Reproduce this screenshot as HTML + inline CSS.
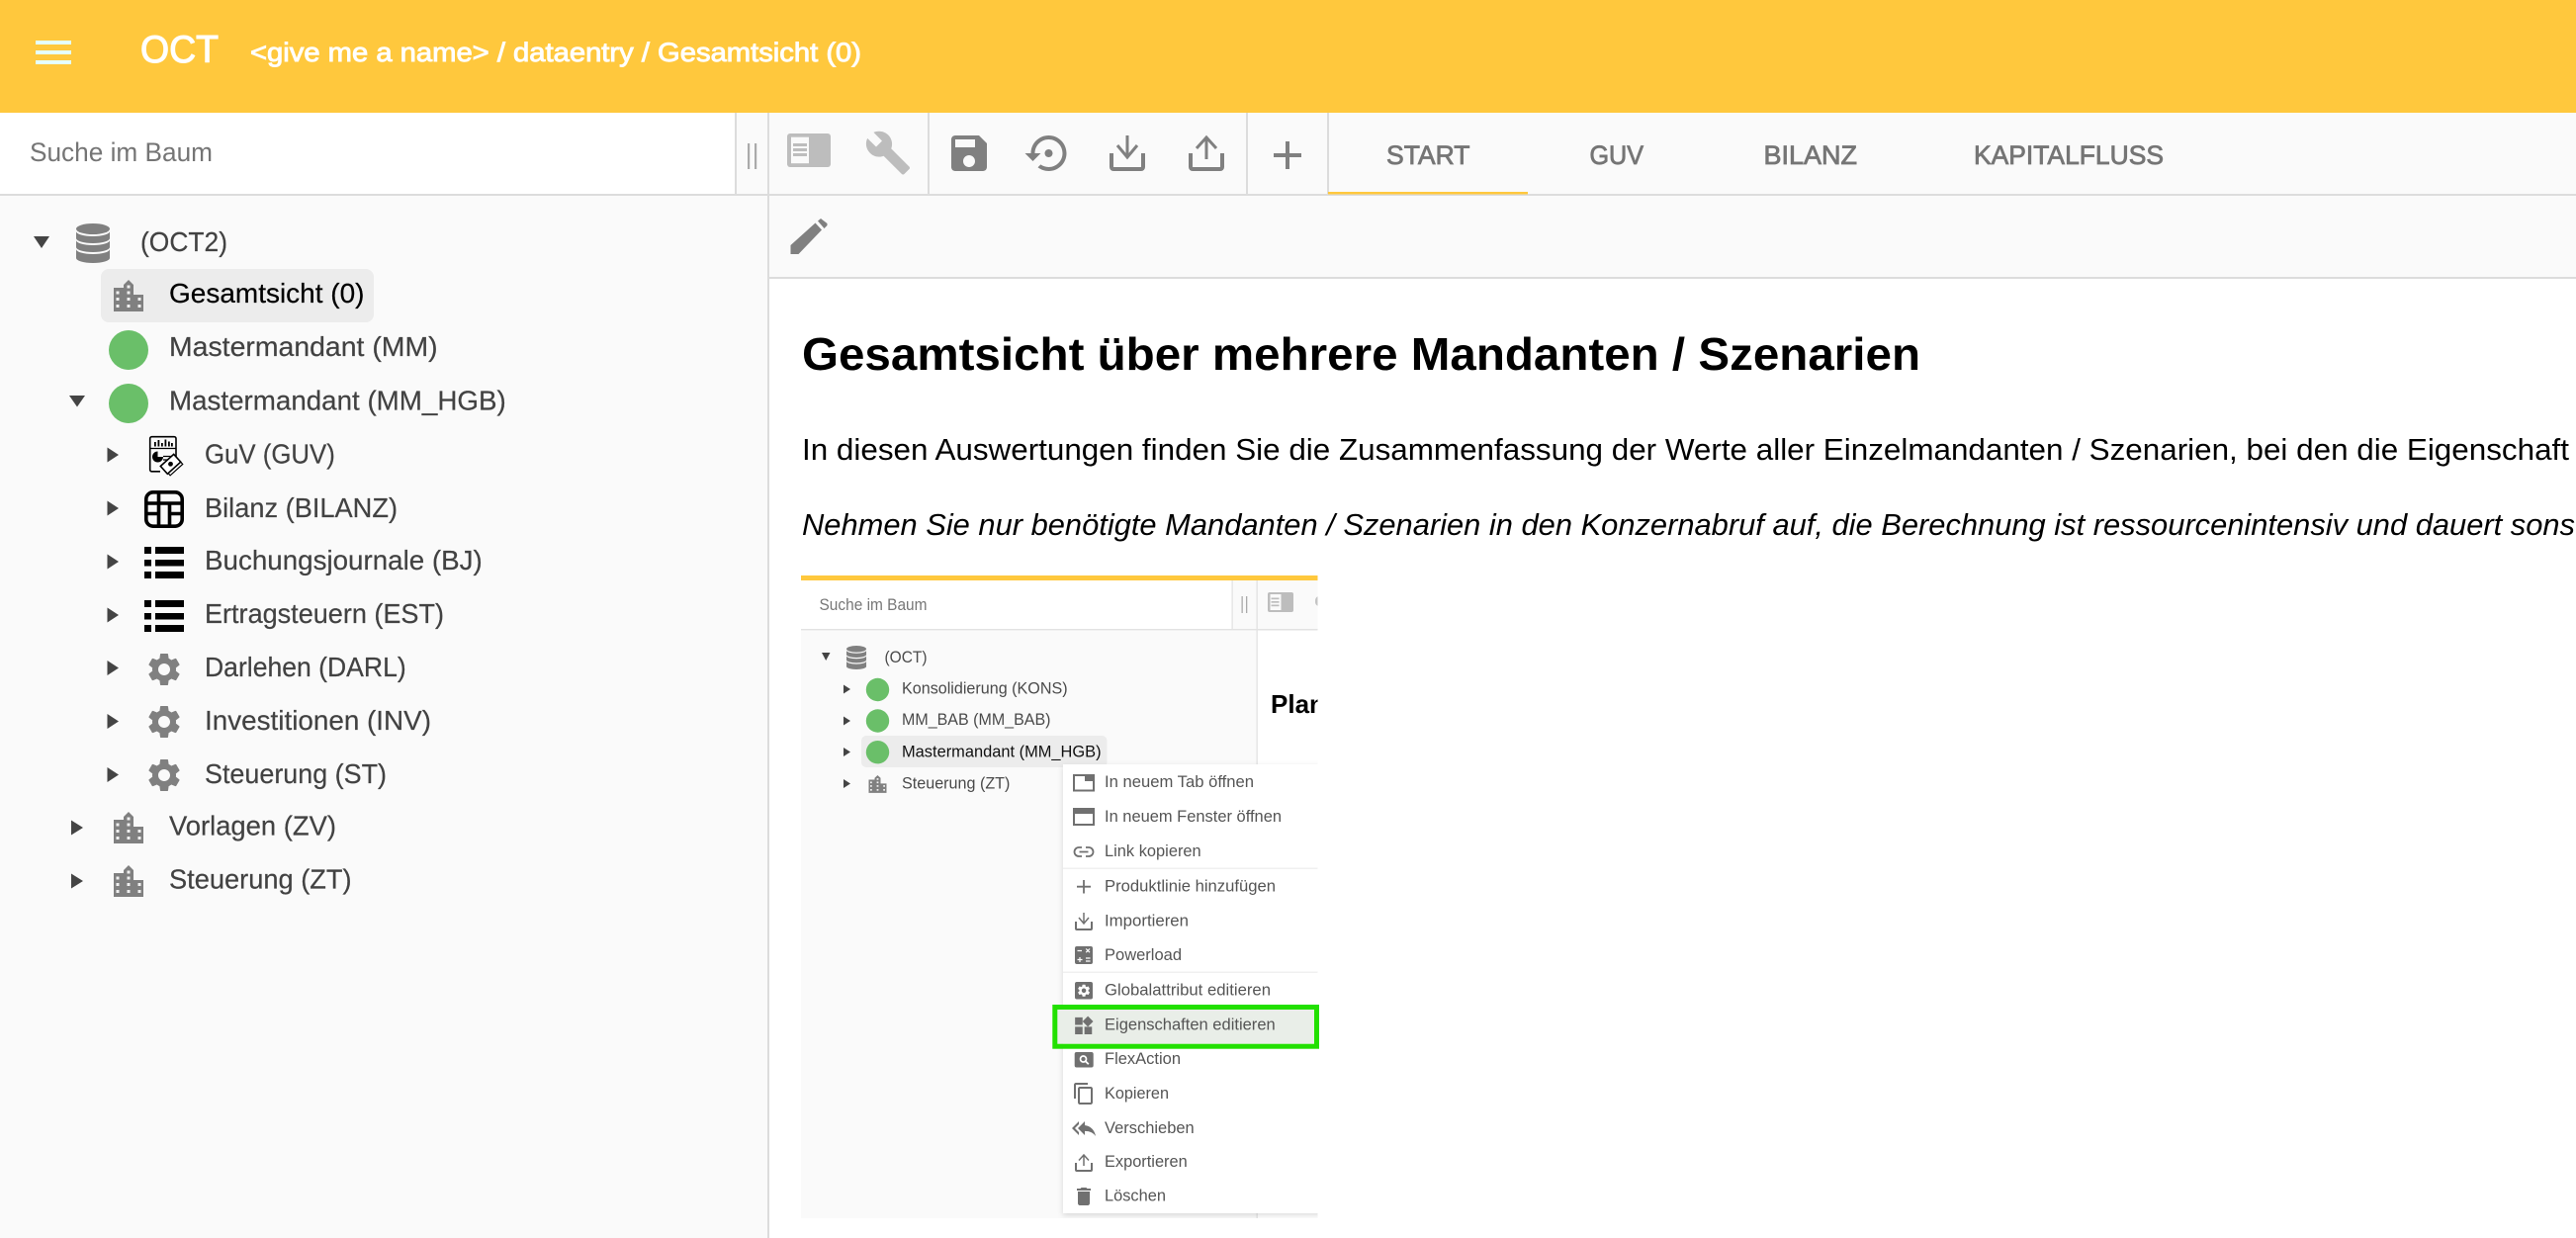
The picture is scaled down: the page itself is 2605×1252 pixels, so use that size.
<!DOCTYPE html>
<html lang="de">
<head>
<meta charset="utf-8">
<title>OCT</title>
<style>
html,body{margin:0;padding:0;background:#fff;width:2605px;height:1252px;overflow:hidden}
svg{display:block}
text{font-family:"Liberation Sans",Arial,sans-serif;white-space:pre}
.t{font-size:28px;fill:#424242;stroke:#424242;stroke-width:.2}
.tab{font-size:27px;fill:#757575;stroke:#757575;stroke-width:.8}
.s{font-size:17px;fill:#4a4a4a}
.m{font-size:17px;fill:#555}
</style>
</head>
<body>
<svg xmlns="http://www.w3.org/2000/svg" width="2605" height="1252" viewBox="0 0 2605 1252">
<defs>
<path id="gear" d="M19.14 12.94c.04-.3.06-.61.06-.94 0-.32-.02-.64-.07-.94l2.03-1.58c.18-.14.23-.41.12-.61l-1.92-3.32c-.12-.22-.37-.29-.59-.22l-2.39.96c-.5-.38-1.03-.7-1.62-.94l-.36-2.54c-.04-.24-.24-.41-.48-.41h-3.84c-.24 0-.43.17-.47.41l-.36 2.54c-.59.24-1.13.57-1.62.94l-2.39-.96c-.22-.08-.47 0-.59.22L2.74 8.87c-.12.21-.08.47.12.61l2.03 1.58c-.05.3-.09.63-.09.94s.02.64.07.94l-2.03 1.58c-.18.14-.23.41-.12.61l1.92 3.32c.12.22.37.29.59.22l2.39-.96c.5.38 1.03.7 1.62.94l.36 2.54c.05.24.24.41.48.41h3.84c.24 0 .44-.17.47-.41l.36-2.54c.59-.24 1.13-.56 1.62-.94l2.39.96c.22.08.47 0 .59-.22l1.92-3.32c.12-.22.07-.47-.12-.61l-2.01-1.58zM12 15.6c-1.98 0-3.6-1.62-3.6-3.6s1.62-3.6 3.6-3.6 3.6 1.62 3.6 3.6-1.62 3.6-3.6 3.6z"/>
<g id="bld">
<path fill="#808080" d="M0 8H10V5L15 0L20 5V15H30V32H0Z"/>
<g fill="#f0f0f0">
<rect x="13.5" y="5.5" width="3" height="3"/>
<rect x="13.5" y="11.5" width="3" height="3"/><rect x="13.5" y="18" width="3" height="3"/><rect x="13.5" y="25" width="3" height="3"/>
<rect x="2.5" y="11.5" width="3" height="3"/><rect x="2.5" y="18" width="3" height="3"/><rect x="2.5" y="25" width="3" height="3"/>
<rect x="24.5" y="18" width="3" height="3"/><rect x="24.5" y="25" width="3" height="3"/>
</g>
</g>
<g id="db" fill="#808080">
<ellipse cx="17" cy="5.5" rx="17" ry="5.5"/>
<path d="M0 8A17 5 0 0 0 34 8V15A17 5 0 0 1 0 15Z"/>
<path d="M0 17A17 5 0 0 0 34 17V24A17 5 0 0 1 0 24Z"/>
<path d="M0 26A17 5 0 0 0 34 26V35A17 5 0 0 1 0 35Z"/>
</g>
<g id="list" fill="#000">
<rect x="0" y="0" width="7" height="7"/><rect x="11" y="0" width="29" height="7"/>
<rect x="0" y="13" width="7" height="6.500"/><rect x="11" y="13" width="29" height="6.500"/>
<rect x="0" y="25" width="7" height="7"/><rect x="11" y="25" width="29" height="7"/>
</g>
<g id="dl" fill="none" stroke-linecap="butt">
<path stroke-width="4" d="M2 18v14a2 2 0 0 0 2 2h28a2 2 0 0 0 2-2V18"/>
<path stroke-width="3" d="M18 0V22M8 10L18 22L28 10"/>
</g>
<g id="ul" fill="none" stroke-linecap="butt">
<path stroke-width="4" d="M2 18v14a2 2 0 0 0 2 2h28a2 2 0 0 0 2-2V18"/>
<path stroke-width="3" d="M18 2V24M8 13L18 2L28 13"/>
</g>
<clipPath id="imgclip"><rect x="810" y="582" width="522.500" height="650"/></clipPath>
<filter id="sh" x="-10%" y="-10%" width="120%" height="120%"><feDropShadow dx="0" dy="2" stdDeviation="3" flood-color="#000" flood-opacity=".14"/></filter>
</defs>

<!-- backgrounds -->
<rect width="2605" height="1252" fill="#fff"/>
<rect x="0" y="114" width="2605" height="84" fill="#fafafa"/>
<rect x="0" y="198" width="777" height="1054" fill="#fafafa"/>
<rect x="778" y="198" width="1827" height="84" fill="#fafafa"/>
<rect x="0" y="114" width="744" height="82" fill="#fff"/>

<!-- header -->
<rect x="0" y="0" width="2605" height="114" fill="#ffc83d"/>
<g fill="#e6ffff"><rect x="36" y="41" width="36" height="4"/><rect x="36" y="51" width="36" height="4"/><rect x="36" y="61" width="36" height="4"/></g>
<text x="142" y="63" font-size="39" fill="#fff" stroke="#fff" stroke-width="1.100" textLength="79" lengthAdjust="spacingAndGlyphs">OCT</text>
<text x="253" y="62" font-size="27" fill="#fff" stroke="#fff" stroke-width=".9" textLength="618" lengthAdjust="spacingAndGlyphs">&lt;give me a name&gt; / dataentry / Gesamtsicht (0)</text>

<!-- structural lines -->
<g fill="#dcdcdc">
<rect x="0" y="196" width="2605" height="2"/>
<rect x="778" y="280" width="1827" height="2"/>
<rect x="743" y="114" width="2" height="83"/>
<rect x="776" y="114" width="2" height="1138"/>
<rect x="938" y="114" width="2" height="82"/>
<rect x="1260" y="114" width="2" height="82"/>
<rect x="1342" y="114" width="2" height="82"/>
</g>
<rect x="1343" y="194" width="202" height="2.500" fill="#ffc83d"/>

<!-- search -->
<text x="30" y="163" font-size="27" fill="#757575" textLength="185" lengthAdjust="spacingAndGlyphs">Suche im Baum</text>
<g fill="#aaa"><rect x="756" y="145" width="2.200" height="26"/><rect x="763" y="145" width="2.200" height="26"/></g>

<!-- toolbar icons -->
<rect x="796" y="135" width="44" height="34" rx="3" fill="#bdbdbd"/>
<rect x="800" y="138.700" width="18" height="26.500" fill="#fafafa"/>
<g fill="#bdbdbd"><rect x="802" y="145" width="14" height="3"/><rect x="802" y="150" width="14" height="3"/><rect x="802" y="155" width="14" height="3"/></g>
<path transform="translate(874 130.500) scale(2)" fill="#bdbdbd" d="M22.700 19l-9.100-9.100c.9-2.300.4-5-1.500-6.900-2-2-5-2.400-7.400-1.300L9 6 6 9 1.600 4.700C.4 7.100.9 10.100 2.900 12.100c1.900 1.900 4.600 2.400 6.900 1.500l9.100 9.100c.4.4 1 .4 1.400 0l2.300-2.300c.5-.4.5-1.100.1-1.400z"/>
<path transform="translate(956 131) scale(2)" fill="#808080" d="M17 3H5c-1.110 0-2 .9-2 2v14c0 1.100.89 2 2 2h14c1.100 0 2-.9 2-2V7l-4-4zm-5 16c-1.660 0-3-1.340-3-3s1.340-3 3-3 3 1.340 3 3-1.340 3-3 3zm3-10H5V5h10v4z"/>
<path transform="translate(1036.500 131) scale(2)" fill="#808080" d="M14 12c0-1.100-.9-2-2-2s-2 .9-2 2 .9 2 2 2 2-.9 2-2zm-2-9c-4.970 0-9 4.030-9 9H0l4 4 4-4H5c0-3.870 3.130-7 7-7s7 3.130 7 7-3.130 7-7 7c-1.510 0-2.910-.49-4.060-1.300l-1.420 1.440C8.040 20.300 9.940 21 12 21c4.970 0 9-4.030 9-9s-4.030-9-9-9z"/>
<use href="#dl" x="1122" y="137" stroke="#808080"/>
<use href="#ul" x="1202" y="137" stroke="#808080"/>
<path d="M1302 143V171M1288 157H1316" stroke="#808080" stroke-width="4" fill="none"/>
<!-- pencil -->
<path fill="#808080" d="M799.500 248L824.500 225.500L831 232.500L807.500 257H799.500Z"/>
<path fill="#808080" d="M827 223.500L830 221L836.500 226V228L833.500 231Z"/>

<!-- tabs -->
<text class="tab" x="1402" y="166" textLength="84.500" lengthAdjust="spacingAndGlyphs">START</text>
<text class="tab" x="1607.500" y="166" textLength="54.500" lengthAdjust="spacingAndGlyphs">GUV</text>
<text class="tab" x="1783.500" y="166" textLength="94.500" lengthAdjust="spacingAndGlyphs">BILANZ</text>
<text class="tab" x="1996" y="166" textLength="192" lengthAdjust="spacingAndGlyphs">KAPITALFLUSS</text>

<!-- tree -->
<path d="M34 239H50L42 251Z" fill="#444"/>
<use href="#db" x="77" y="226"/>
<text class="t" x="142" y="254" textLength="88" lengthAdjust="spacingAndGlyphs">(OCT2)</text>

<rect x="102" y="272" width="276" height="54" rx="8" fill="#ececec"/>
<use href="#bld" x="115" y="283"/>
<text class="t" x="171" y="306" style="fill:#000;stroke:#000" textLength="197.500" lengthAdjust="spacingAndGlyphs">Gesamtsicht (0)</text>

<ellipse cx="130" cy="354" rx="20" ry="20" fill="#6abf69"/>
<text class="t" x="171" y="360" textLength="271.600" lengthAdjust="spacingAndGlyphs">Mastermandant (MM)</text>

<path d="M70 400H86L78 411.500Z" fill="#444"/>
<ellipse cx="130" cy="408" rx="20" ry="20" fill="#6abf69"/>
<text class="t" x="171" y="414.500" textLength="340.700" lengthAdjust="spacingAndGlyphs">Mastermandant (MM_HGB)</text>

<g fill="#444">
<path d="M108.500 452.500L120 460L108.500 467.500Z"/>
<path d="M108.500 506.500L120 514L108.500 521.500Z"/>
<path d="M108.500 560.500L120 568L108.500 575.500Z"/>
<path d="M108.500 614.500L120 622L108.500 629.500Z"/>
<path d="M108.500 668L120 675.500L108.500 683Z"/>
<path d="M108.500 722L120 729.500L108.500 737Z"/>
<path d="M108.500 776L120 783.500L108.500 791Z"/>
<path d="M72 829.500L84 837L72 844.500Z"/>
<path d="M72 883.500L84 891L72 898.500Z"/>
</g>

<text class="t" x="207" y="468.500" textLength="131.800" lengthAdjust="spacingAndGlyphs">GuV (GUV)</text>
<text class="t" x="207" y="522.800" textLength="195" lengthAdjust="spacingAndGlyphs">Bilanz (BILANZ)</text>
<text class="t" x="207" y="576" textLength="280.800" lengthAdjust="spacingAndGlyphs">Buchungsjournale (BJ)</text>
<text class="t" x="207" y="630" textLength="242" lengthAdjust="spacingAndGlyphs">Ertragsteuern (EST)</text>
<text class="t" x="207" y="684" textLength="203.700" lengthAdjust="spacingAndGlyphs">Darlehen (DARL)</text>
<text class="t" x="207" y="738" textLength="229" lengthAdjust="spacingAndGlyphs">Investitionen (INV)</text>
<text class="t" x="207" y="792" textLength="184" lengthAdjust="spacingAndGlyphs">Steuerung (ST)</text>
<text class="t" x="171" y="844.500" textLength="169" lengthAdjust="spacingAndGlyphs">Vorlagen (ZV)</text>
<text class="t" x="171" y="898.500" textLength="184.600" lengthAdjust="spacingAndGlyphs">Steuerung (ZT)</text>

<!-- GuV icon -->
<g fill="none" stroke="#000">
<path stroke-width="1.600" d="M178 462V443.500a1.800 1.800 0 0 0-1.800-1.800H153.500a1.800 1.800 0 0 0-1.800 1.800V475a1.800 1.800 0 0 0 1.800 1.800H162"/>
<path stroke-width="1.300" d="M152 453.500H178M165 465H172M165 461.500H174"/>
</g>
<g fill="#000">
<rect x="156" y="447" width="1.800" height="4.500"/><rect x="159.500" y="445" width="1.800" height="6.500"/><rect x="163" y="448" width="1.800" height="3.500"/><rect x="166.500" y="444.500" width="1.800" height="7"/><rect x="170" y="446.500" width="1.800" height="5"/><rect x="173" y="448" width="1.800" height="3.500"/>
<path d="M159.500 456.500a5.500 5.500 0 1 0 5.500 5.500H159.500Z"/>
</g>
<g transform="translate(172.700 469.500) rotate(-42)">
<rect x="-8" y="-2" width="17" height="10" fill="#fff" stroke="#000" stroke-width="1.200"/>
<rect x="-9" y="-5.500" width="18" height="10.500" fill="#fff" stroke="#000" stroke-width="1.600"/>
<circle cx="0" cy="-.3" r="2.400" fill="#000"/>
</g>

<!-- Bilanz icon -->
<g fill="none" stroke="#000" stroke-width="3.600">
<rect x="147.800" y="497.800" width="36.400" height="34.400" rx="7"/>
<path d="M160.500 497.800V532.200M147.800 509H160.500M147.800 519.500H160.500M160.500 509H184.200M171.500 509V532.200M171.500 519.500H184.200"/>
</g>

<use href="#list" x="146" y="553"/>
<use href="#list" x="146" y="607"/>

<g fill="#808080">
<use href="#gear" transform="translate(146 657) scale(1.667)"/>
<use href="#gear" transform="translate(146 710) scale(1.667)"/>
<use href="#gear" transform="translate(146 764) scale(1.667)"/>
</g>
<use href="#bld" x="115" y="821"/>
<use href="#bld" x="115" y="875"/>

<!-- content -->
<text x="811" y="374" font-size="46" font-weight="700" fill="#000" textLength="1131" lengthAdjust="spacingAndGlyphs">Gesamtsicht über mehrere Mandanten / Szenarien</text>
<text x="811" y="465" font-size="31" fill="#000" textLength="1787" lengthAdjust="spacingAndGlyphs">In diesen Auswertungen finden Sie die Zusammenfassung der Werte aller Einzelmandanten / Szenarien, bei den die Eigenschaft</text>
<text x="811" y="541" font-size="31" font-style="italic" fill="#000" textLength="1793" lengthAdjust="spacingAndGlyphs">Nehmen Sie nur benötigte Mandanten / Szenarien in den Konzernabruf auf, die Berechnung ist ressourcenintensiv und dauert sons</text>

<!-- embedded screenshot -->
<g clip-path="url(#imgclip)">
<rect x="810" y="582" width="523" height="650" fill="#fff"/>
<rect x="810" y="638" width="461" height="594" fill="#fafafa"/>
<rect x="810" y="582" width="523" height="5" fill="#ffc83d"/>
<rect x="1247" y="587" width="86" height="49" fill="#fafafa"/>
<rect x="810" y="636" width="523" height="1.500" fill="#e2e2e2"/>
<rect x="1245.500" y="587" width="1.300" height="49" fill="#e2e2e2"/>
<rect x="1270.500" y="587" width="1.300" height="645" fill="#e2e2e2"/>
<text x="828.500" y="617" font-size="17" fill="#777" textLength="109" lengthAdjust="spacingAndGlyphs">Suche im Baum</text>
<g fill="#aaa"><rect x="1255.500" y="603" width="1.300" height="17"/><rect x="1260" y="603" width="1.300" height="17"/></g>
<rect x="1282" y="599" width="26" height="20" rx="2" fill="#bdbdbd"/>
<rect x="1284.500" y="601" width="11" height="16" fill="#fafafa"/>
<g fill="#bdbdbd"><rect x="1285.500" y="604.500" width="8" height="1.700"/><rect x="1285.500" y="608" width="8" height="1.700"/><rect x="1285.500" y="611.500" width="8" height="1.700"/></g>
<path d="M1333 603a5 5 0 0 0-3 5a5 5 0 0 0 3 5Z" fill="#c4c4c4"/>
<text x="1285" y="721" font-size="26" font-weight="700" fill="#000">Plan</text>

<!-- small tree -->
<path d="M831 660H839.500L835.200 668Z" fill="#444"/>
<use href="#db" transform="translate(856 653) scale(.59 .6)"/>
<text class="s" x="894.500" y="670" textLength="43" lengthAdjust="spacingAndGlyphs">(OCT)</text>

<rect x="871" y="744" width="248.500" height="32" rx="5" fill="#ececec"/>
<g fill="#444">
<path d="M853 692.500L860 697L853 701.500Z"/>
<path d="M853 724.500L860 729L853 733.500Z"/>
<path d="M853 756L860 760.500L853 765Z"/>
<path d="M853 788L860 792.500L853 797Z"/>
</g>
<g fill="#6abf69">
<circle cx="887.500" cy="697.500" r="11.700"/>
<circle cx="887.500" cy="729" r="11.700"/>
<circle cx="887.500" cy="760.700" r="11.700"/>
</g>
<use href="#bld" transform="translate(878.500 784) scale(.6 .56)"/>
<text class="s" x="912" y="701.700" textLength="167.600" lengthAdjust="spacingAndGlyphs">Konsolidierung (KONS)</text>
<text class="s" x="912" y="733" textLength="150.500" lengthAdjust="spacingAndGlyphs">MM_BAB (MM_BAB)</text>
<text class="s" x="912" y="765.700" style="fill:#111" textLength="201.600" lengthAdjust="spacingAndGlyphs">Mastermandant (MM_HGB)</text>
<text class="s" x="912" y="797.700" textLength="109.400" lengthAdjust="spacingAndGlyphs">Steuerung (ZT)</text>

<!-- context menu -->
<rect x="1075" y="773" width="320" height="454" fill="#fff" filter="url(#sh)"/>
<rect x="1075" y="877.500" width="258" height="1.500" fill="#f0f0f0"/>
<rect x="1075" y="982.500" width="258" height="1.500" fill="#f0f0f0"/>

<g fill="#707070" stroke="none">
<!-- tab -->
<rect x="1086" y="784" width="20" height="15.500" fill="none" stroke="#707070" stroke-width="2"/>
<rect x="1097" y="784" width="9" height="6"/>
<!-- window -->
<rect x="1086" y="818" width="20" height="16" fill="none" stroke="#707070" stroke-width="2"/>
<rect x="1086" y="818" width="20" height="5"/>
<!-- link -->
<path d="M1094 857H1091a4.500 4.500 0 0 0 0 9H1094M1098 857H1101a4.500 4.500 0 0 1 0 9H1098M1091.500 861.500H1100.500" fill="none" stroke="#707070" stroke-width="1.800"/>
<!-- plus -->
<path d="M1096 890V903.500M1089 896.700H1103" fill="none" stroke="#707070" stroke-width="1.800"/>
<!-- import / export -->
<use href="#dl" transform="translate(1087 923) scale(.5)" stroke="#707070"/>
<use href="#ul" transform="translate(1087 1167) scale(.5)" stroke="#707070"/>
<!-- powerload -->
<rect x="1087" y="957" width="18" height="18" rx="2"/>
<path d="M1089.500 961.500H1094M1098.200 959.500L1102 963.200M1102 959.500L1098.200 963.200M1089.500 970.500H1094.500M1092 968V973M1098 969H1102.500M1098 972H1102.500" fill="none" stroke="#fff" stroke-width="1.200"/>
<!-- global -->
<rect x="1087" y="993" width="18" height="17.500" rx="2"/>
<use href="#gear" transform="translate(1088.500 994.200) scale(.63)" fill="#fff"/>
<!-- flex -->
<rect x="1086.700" y="1064" width="19" height="15.500" rx="2"/>
<circle cx="1095.500" cy="1071" r="3" fill="none" stroke="#fff" stroke-width="1.700"/>
<path d="M1097.800 1073.300L1100.800 1076.300" stroke="#fff" stroke-width="1.800"/>
<!-- copy -->
<path transform="translate(1084 1094)" d="M16 1H4c-1.100 0-2 .9-2 2v14h2V3h12V1zm3 4H8c-1.100 0-2 .9-2 2v14c0 1.100.9 2 2 2h11c1.100 0 2-.9 2-2V7c0-1.100-.9-2-2-2zm0 16H8V7h11v14z"/>
<!-- move -->
<path transform="translate(1084 1129)" d="M7 8V5l-7 7 7 7v-3l-4-4 4-4zm6 1V5l-7 7 7 7v-4.100c5 0 8.500 1.600 11 5.100-1-5-4-10-11-11z"/>
<!-- delete -->
<path transform="translate(1084 1198)" d="M6 19c0 1.100.9 2 2 2h8c1.100 0 2-.9 2-2V7H6v12zM19 4h-3.500l-1-1h-5l-1 1H5v2h14V4z"/>
</g>

<text class="m" x="1117" y="796" textLength="151" lengthAdjust="spacingAndGlyphs">In neuem Tab öffnen</text>
<text class="m" x="1117" y="831" textLength="179" lengthAdjust="spacingAndGlyphs">In neuem Fenster öffnen</text>
<text class="m" x="1117" y="866" textLength="97.700" lengthAdjust="spacingAndGlyphs">Link kopieren</text>
<text class="m" x="1117" y="901.700" textLength="173" lengthAdjust="spacingAndGlyphs">Produktlinie hinzufügen</text>
<text class="m" x="1117" y="936.700" textLength="85" lengthAdjust="spacingAndGlyphs">Importieren</text>
<text class="m" x="1117" y="971" textLength="78" lengthAdjust="spacingAndGlyphs">Powerload</text>
<text class="m" x="1117" y="1006.700" textLength="168" lengthAdjust="spacingAndGlyphs">Globalattribut editieren</text>
<text class="m" x="1117" y="1076" textLength="77" lengthAdjust="spacingAndGlyphs">FlexAction</text>
<text class="m" x="1117" y="1111" textLength="65" lengthAdjust="spacingAndGlyphs">Kopieren</text>
<text class="m" x="1117" y="1146" textLength="90.700" lengthAdjust="spacingAndGlyphs">Verschieben</text>
<text class="m" x="1117" y="1180" textLength="83.700" lengthAdjust="spacingAndGlyphs">Exportieren</text>
<text class="m" x="1117" y="1214.700" textLength="62" lengthAdjust="spacingAndGlyphs">Löschen</text>
</g>

<!-- green highlight extends past the embedded image edge -->
<rect x="1069" y="1021" width="260.500" height="34.500" fill="#e9eee8"/>
<rect x="1066.800" y="1018.500" width="264.700" height="39.700" fill="none" stroke="#22e000" stroke-width="5"/>
<path fill="#707070" transform="translate(1084.300 1026) scale(.95)" d="M13 13v8h8v-8h-8zM3 21h8v-8H3v8zM3 3v8h8V3H3zm13.660-1.310L11 7.340 16.660 13l5.660-5.660-5.660-5.650z"/>
<text class="m" x="1117" y="1041.700" textLength="172.700" lengthAdjust="spacingAndGlyphs">Eigenschaften editieren</text>
</svg>
</body>
</html>
